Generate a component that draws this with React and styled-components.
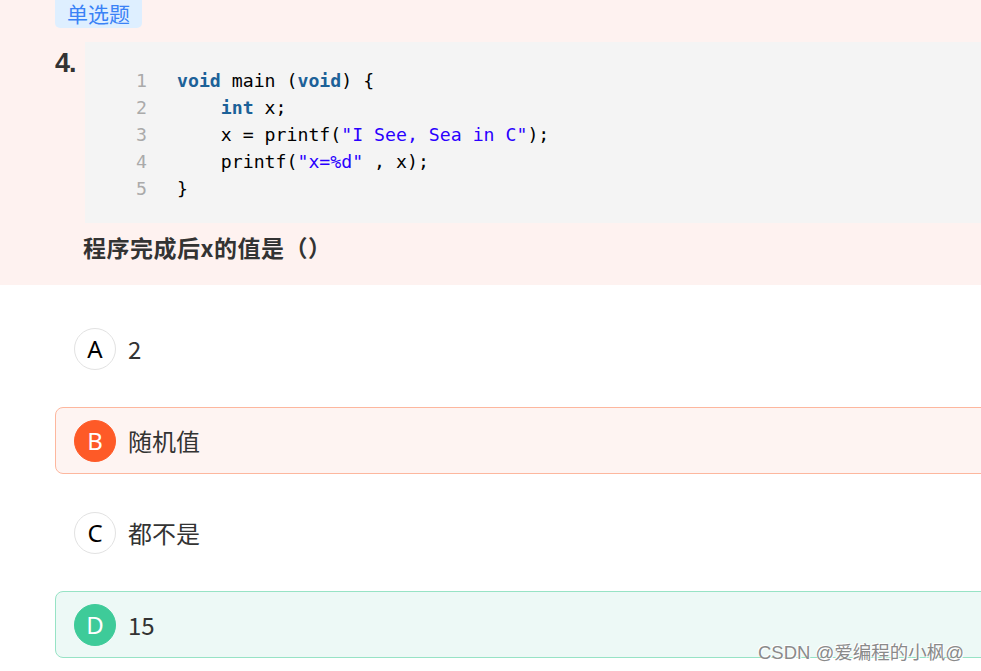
import React from 'react'
import styled, { createGlobalStyle } from 'styled-components'

const GlobalStyle = createGlobalStyle`
  html, body {
    margin: 0;
    padding: 0;
    background: #ffffff;
    overflow: hidden;
  }
  body {
    font-family: "Noto Sans CJK SC", "Noto Sans", sans-serif;
    color: #333;
  }
`

const Page = styled.div`
  width: 1060px;
  position: relative;
  min-height: 671px;
`

const Stem = styled.section`
  background: #fef2f0;
  padding: 0 0 20px 55px;
`

const Badge = styled.span`
  display: inline-block;
  height: 28px;
  line-height: 27px;
  padding: 0 12px;
  background: #deefff;
  color: #3a82f6;
  font-size: 21px;
  border-radius: 0 0 5px 5px;
`

const QuestionRow = styled.div`
  display: flex;
  margin-top: 14px;
`

const Num = styled.div`
  width: 30px;
  font-family: "Liberation Sans", Arial, sans-serif;
  font-weight: 700;
  font-size: 27px;
  line-height: 1;
  color: #333;
  padding-top: 8px;
  letter-spacing: -1px;
`

const Body = styled.div`
  flex: 1;
`

const CodeBlock = styled.div`
  background: #f4f4f4;
  padding: 25px 0 21px 40px;
  font-family: "DejaVu Sans Mono", "Liberation Mono", monospace;
  font-size: 18.2px;
  color: #000;
`

const Line = styled.div`
  display: flex;
  height: 27px;
  line-height: 27px;
  white-space: pre;
`

const LineNo = styled.span`
  width: 22px;
  text-align: right;
  color: #aaa;
  margin-right: 30px;
`

const Kw = styled.span`
  color: #1c6198;
  font-weight: 700;
`

const Str = styled.span`
  color: #2a00ff;
`

const Question = styled.div`
  margin: 6px 0 0 -2px;
  font-size: 23px;
  font-weight: 700;
  line-height: 36px;
  color: #333;
  letter-spacing: 0.5px;
`

const Options = styled.div`
  padding: 30px 0 0 55px;
  display: flex;
  flex-direction: column;
  gap: 25px;
`

const tones = {
  none: { bg: 'transparent', border: 'transparent', dot: '#fff', dotBorder: '#e2e2e2', dotText: '#000' },
  wrong: { bg: '#fef4f2', border: '#fdb79e', dot: '#fe5a27', dotBorder: '#fe5a27', dotText: '#fff' },
  right: { bg: '#edf9f6', border: '#97e3c5', dot: '#3ecb99', dotBorder: '#3ecb99', dotText: '#fff' },
}

const Option = styled.div`
  display: flex;
  align-items: center;
  gap: 12px;
  height: 67px;
  box-sizing: border-box;
  padding-left: 18px;
  border: 1px solid ${p => tones[p.$tone].border};
  background: ${p => tones[p.$tone].bg};
  border-radius: 8px;
`

const Dot = styled.span`
  width: 42px;
  height: 42px;
  box-sizing: border-box;
  border-radius: 50%;
  border: 1px solid ${p => tones[p.$tone].dotBorder};
  background: ${p => tones[p.$tone].dot};
  color: ${p => tones[p.$tone].dotText};
  display: flex;
  align-items: center;
  justify-content: center;
  font-family: "Noto Sans", "Open Sans", sans-serif;
  font-weight: 400;
  font-size: 24px;
`

const OptText = styled.span`
  font-size: 24px;
  color: #333;
`

const Watermark = styled.div`
  position: absolute;
  left: 758px;
  top: 638px;
  font-family: "Liberation Sans", "Noto Sans CJK SC", sans-serif;
  font-size: 18.5px;
  color: #8a8a8a;
  text-shadow: 1px 1px 0 #fff, -1px -1px 0 #fff;
  white-space: nowrap;
`

const options = [
  { key: 'A', text: '2', tone: 'none' },
  { key: 'B', text: '随机值', tone: 'wrong' },
  { key: 'C', text: '都不是', tone: 'none' },
  { key: 'D', text: '15', tone: 'right' },
]

const App = () => {
  return (
    <Page>
      <GlobalStyle />
      <Stem>
        <Badge>单选题</Badge>
        <QuestionRow>
          <Num>4.</Num>
          <Body>
            <CodeBlock>
              <Line><LineNo>1</LineNo><span><Kw>void</Kw> main (<Kw>void</Kw>) {'{'}</span></Line>
              <Line><LineNo>2</LineNo><span>    <Kw>int</Kw> x;</span></Line>
              <Line><LineNo>3</LineNo><span>    x = printf(<Str>"I See, Sea in C"</Str>);</span></Line>
              <Line><LineNo>4</LineNo><span>    printf(<Str>"x=%d"</Str> , x);</span></Line>
              <Line><LineNo>5</LineNo><span>{'}'}</span></Line>
            </CodeBlock>
            <Question>程序完成后x的值是（）</Question>
          </Body>
        </QuestionRow>
      </Stem>
      <Options>
        {options.map(o => (
          <Option key={o.key} $tone={o.tone}>
            <Dot $tone={o.tone}>{o.key}</Dot>
            <OptText>{o.text}</OptText>
          </Option>
        ))}
      </Options>
      <Watermark>CSDN @爱编程的小枫@</Watermark>
    </Page>
  )
}

export default App
